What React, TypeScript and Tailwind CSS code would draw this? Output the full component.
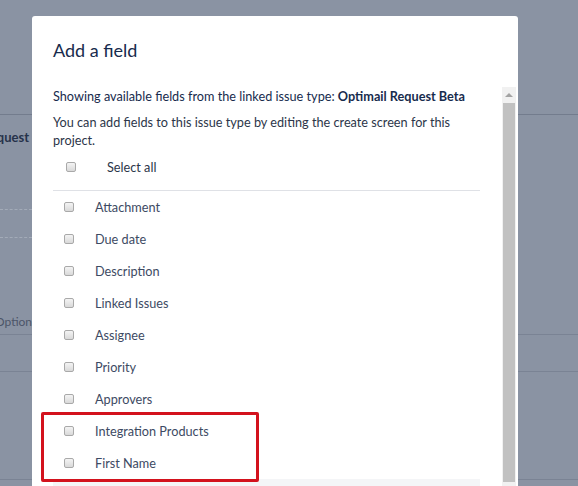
const fields = [
  "Attachment",
  "Due date",
  "Description",
  "Linked Issues",
  "Assignee",
  "Priority",
  "Approvers",
  "Integration Products",
  "First Name",
];

const Box = () => (
  <span className="block w-[10px] h-[10px] shrink-0 rounded-[2px] border border-[#a9a9a9] bg-gradient-to-b from-[#f4f4f4] to-[#d9d9d9]" />
);

export default function App() {
  return (
    <div className="relative h-[486px] w-[578px] overflow-hidden bg-[#8a93a3] font-['Lato',sans-serif]">
      {/* page behind the dimmed overlay */}
      <div className="flex flex-col">
        <div className="h-[114px]" />
        <div className="h-px bg-[#737c8d]" />
        <div className="pt-[13px] text-[13px] font-bold leading-[18px] text-[#26324a]">
          <span className="-ml-[18px]">Request</span>
        </div>
        <div className="mt-[63px] w-[32px] border-t border-dashed border-[#a3abb8]" />
        <div className="mt-[27px] w-[32px] border-t border-dashed border-[#a3abb8]" />
        <div className="mt-[76px] -ml-[5px] text-[12px] leading-[16px] text-[#4c5568]">Optional</div>
        <div className="mt-[4px] h-px bg-[#7a8394]" />
        <div className="mt-[36px] h-px bg-[#7a8394]" />
        <div className="mt-[107px] h-px bg-[#7a8394]" />
      </div>

      {/* modal */}
      <div className="absolute left-[32px] top-[16px] w-[486px] h-[480px] rounded-[3px] bg-white flex flex-col">
        <div className="h-[71px] shrink-0 pl-[21px] pt-[22px] text-[18px] leading-[24px] text-[#172b4d]">Add a field</div>
        <div className="flex flex-1">
          <div className="flex-1 pl-[21px] pr-[22px] text-[12.7px] leading-[18px] text-[#172b4d]">
            <p>
              Showing available fields from the linked issue type: <b className="font-bold">Optimail Request Beta</b>
            </p>
            <p className="mt-[8px] text-[#2c3649]">
              You can add fields to this issue type by editing the create screen for this project.
            </p>
            <div className="mt-[2px] flex h-[32px] items-center pl-[13px] text-[#2c3649]">
              <Box />
              <span className="ml-[31px]">Select all</span>
            </div>
            <div className="mt-[7px] h-px bg-[#dfe1e6]" />
            {fields.map((f) => (
              <div key={f} className="flex h-[32px] items-center pl-[11px] text-[#3d4a63]">
                <Box />
                <span className="ml-[21px]">{f}</span>
              </div>
            ))}
            <div className="h-[20px] bg-[#f4f5f7]" />
          </div>
          <div className="mr-[2px] flex w-[14px] flex-col bg-[#f1f1f1]">
            <div className="flex h-[16px] items-center justify-center">
              <span className="block h-0 w-0 border-x-[4px] border-b-[4px] border-x-transparent border-b-[#a3a3a3]" />
            </div>
            <div className="mx-[1px] h-[379px] bg-[#c1c1c1]" />
          </div>
        </div>

        {/* annotation */}
        <div className="pointer-events-none absolute left-[9px] top-[396px] h-[70px] w-[218px] rounded-[2px] border-[3px] border-[#d3121d]" />
      </div>
    </div>
  );
}
